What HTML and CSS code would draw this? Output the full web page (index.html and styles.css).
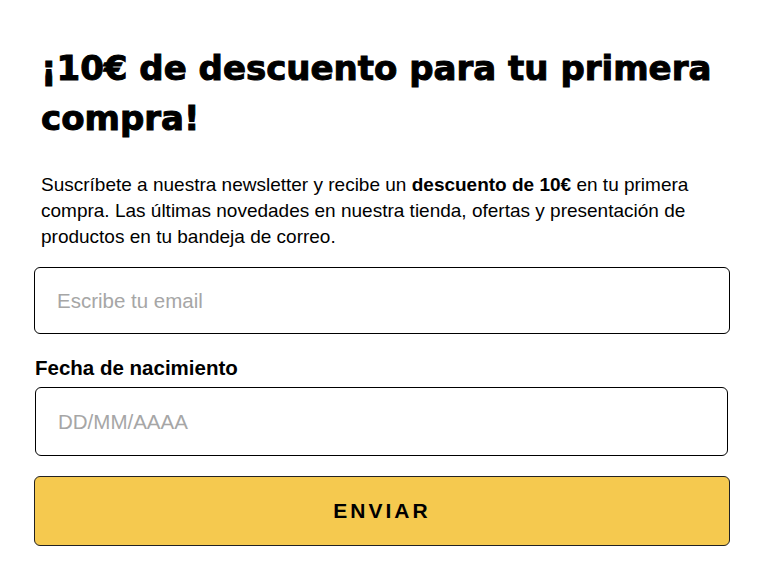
FILE: index.html
```html
<!DOCTYPE html>
<html lang="es">
<head>
<meta charset="utf-8">
<link rel="stylesheet" href="styles.css">
</head>
<body>
<div class="wrap">
  <h1 class="title">¡10€ de descuento para tu primera compra!</h1>
  <p class="desc">Suscríbete a nuestra newsletter y recibe un <b>descuento de 10€</b> en tu primera compra. Las últimas novedades en nuestra tienda, ofertas y presentación de productos en tu bandeja de correo.</p>
  <form class="form">
    <input class="field field-email" type="text" placeholder="Escribe tu email">
    <label class="label">Fecha de nacimiento</label>
    <input class="field field-date" type="text" placeholder="DD/MM/AAAA">
    <button class="btn" type="button">ENVIAR</button>
  </form>
</div>
</body>
</html>
```
FILE: styles.css
```css
html, body { margin: 0; padding: 0; background: #fff; }
body { font-family: "Liberation Sans", Arial, sans-serif; color: #000; }
.wrap { padding: 43px 34px 0 34px; }
.title {
  margin: 0 0 0 7px;
  font-family: "DejaVu Sans", "Liberation Sans", sans-serif;
  font-size: 34px;
  line-height: 50px;
  font-weight: 700;
  -webkit-text-stroke: 1px #000;
}
.desc {
  margin: 29px 0 0 7px;
  font-size: 19px;
  line-height: 26px;
}
.desc b { font-weight: 700; }
.form { display: flex; flex-direction: column; margin-top: 17px; }
.field {
  box-sizing: border-box;
  height: 67px;
  border: 1px solid #000;
  border-radius: 6px;
  padding: 0 22px;
  font-family: "Liberation Sans", Arial, sans-serif;
  font-size: 20.5px;
  outline: none;
}
.field::placeholder { color: #a6a6a6; }
.field-email { width: 696px; }
.field-date { width: 693px; margin-left: 1px; height: 69px; }
.label {
  margin: 23px 0 8px 1px;
  font-size: 20.5px;
  font-weight: 700;
  line-height: 22px;
}
.btn {
  margin-top: 20px;
  width: 696px;
  height: 70px;
  box-sizing: border-box;
  background: #f5c94f;
  border: 1px solid #222;
  border-radius: 6px;
  font-family: "Liberation Sans", Arial, sans-serif;
  font-size: 21px;
  font-weight: 700;
  letter-spacing: 3px;
  color: #000;
}
```
